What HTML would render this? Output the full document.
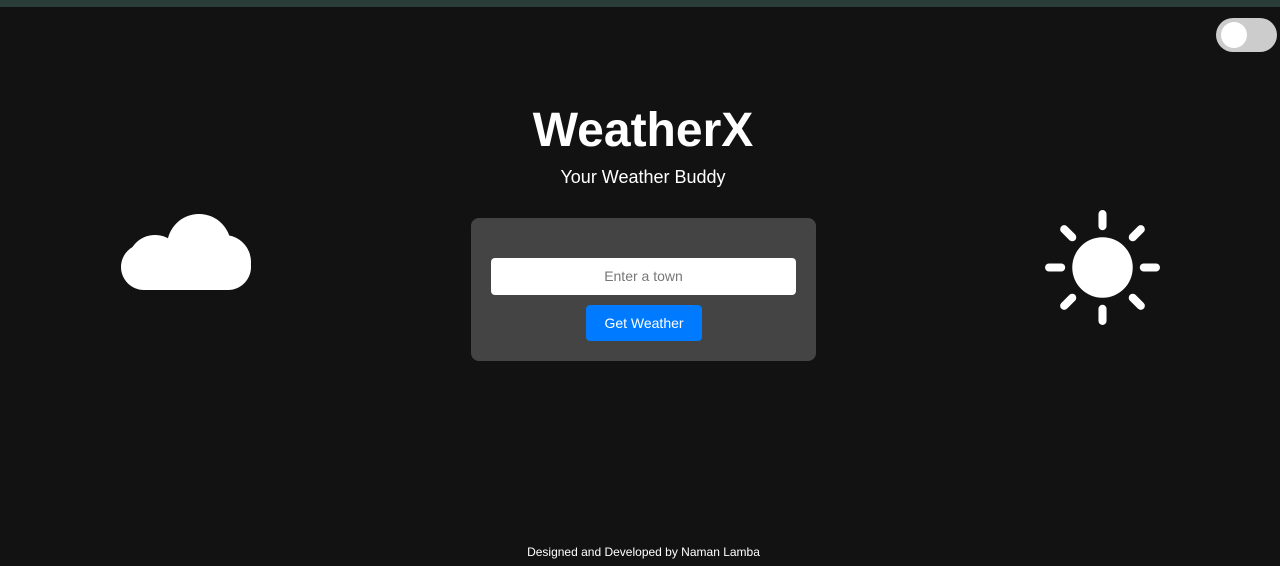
<!DOCTYPE html>
<html><head><meta charset="utf-8"><style>
*{margin:0;padding:0;box-sizing:border-box}
body{width:1280px;height:566px;background:#121212;font-family:"Liberation Sans",Arial,sans-serif;color:#fff;position:relative;overflow:hidden}
.bar{position:absolute;left:0;top:0;width:1280px;height:7px;background:#2b3d38}
.toggle{position:absolute;left:1216px;top:18px;width:61px;height:34px;border-radius:17px;background:#ccc}
.toggle i{position:absolute;left:5px;top:4px;width:26px;height:26px;border-radius:50%;background:#fff}
h1{position:absolute;left:0;width:1286px;text-align:center;top:102px;font-size:48px;font-weight:bold;line-height:58px}
.sub{position:absolute;left:0;width:1286px;text-align:center;top:166px;font-size:18px;line-height:22px}
.panel{position:absolute;left:471px;top:218px;width:345px;height:143px;background:#444;border-radius:8px}
.input{position:absolute;left:20px;top:40px;width:305px;height:37px;background:#fff;border-radius:4px;color:#777;font-size:14px;text-align:center;line-height:37px}
.btn{position:absolute;left:115px;top:87px;width:116px;height:36px;background:#007bff;border-radius:4px;font-size:14px;text-align:center;line-height:36px}
.foot{position:absolute;left:0;width:1287px;text-align:center;top:545px;font-size:12px;line-height:15px}
svg{position:absolute}
</style></head><body>
<div class="bar"></div>
<div class="toggle"><i></i></div>
<svg style="left:110px;top:200px" width="160" height="100" viewBox="110 200 160 100">
<g fill="#fff">
<rect x="121" y="244" width="130" height="46" rx="23"/>
<circle cx="199" cy="246" r="32"/>
<circle cx="155" cy="262" r="27"/>
<circle cx="224" cy="262" r="27"/>
</g></svg>
<svg style="left:1040px;top:205px" width="125" height="125" viewBox="-62 -62 124 124">
<circle cx="0" cy="0" r="30" fill="#fff"/>
<g stroke="#fff" stroke-width="8" stroke-linecap="round">
<line x1="0" y1="-53" x2="0" y2="-41"/><line x1="0" y1="53" x2="0" y2="41"/>
<line x1="-53" y1="0" x2="-41" y2="0"/><line x1="53" y1="0" x2="41" y2="0"/>
<line x1="-38" y1="-38" x2="-30" y2="-30"/><line x1="38" y1="-38" x2="30" y2="-30"/>
<line x1="-38" y1="38" x2="-30" y2="30"/><line x1="38" y1="38" x2="30" y2="30"/>
</g></svg>
<h1>WeatherX</h1>
<div class="sub">Your Weather Buddy</div>
<div class="panel"><div class="input">Enter a town</div><div class="btn">Get Weather</div></div>
<div class="foot">Designed and Developed by Naman Lamba</div>
</body></html>
